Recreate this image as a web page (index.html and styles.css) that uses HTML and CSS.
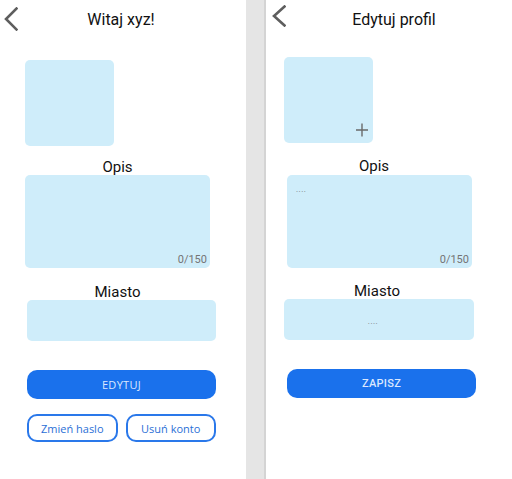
FILE: index.html
```html
<!DOCTYPE html>
<html lang="pl">
<head>
<meta charset="utf-8">
<title>Profil</title>
<link rel="stylesheet" href="styles.css">
</head>
<body>
<div class="screen">
  <section class="panel panel-left">
    <header class="header header-left">
      <svg class="back back-left" width="14" height="24" viewBox="0 0 14 24"><path d="M12.5 1.5 L2 12 L12.5 22.5" fill="none" stroke="#5e5e5e" stroke-width="2.6" stroke-linecap="square"/></svg>
      <h1 class="title">Witaj xyz!</h1>
    </header>
    <div class="content content-left">
      <div class="avatar avatar-left"></div>
      <div class="label label-opis-left">Opis</div>
      <div class="textarea">
        <span class="counter">0/150</span>
      </div>
      <div class="label label-miasto-left">Miasto</div>
      <div class="input input-left"></div>
      <button class="btn-primary btn-edit">EDYTUJ</button>
      <div class="btn-row">
        <button class="btn-outline">Zmień haslo</button>
        <button class="btn-outline">Usuń konto</button>
      </div>
    </div>
  </section>
  <div class="divider"></div>
  <section class="panel panel-right">
    <header class="header header-right">
      <svg class="back back-right" width="14" height="22" viewBox="0 0 14 22"><path d="M12.5 1.5 L2 11 L12.5 20.5" fill="none" stroke="#5e5e5e" stroke-width="2.6" stroke-linecap="square"/></svg>
      <h1 class="title">Edytuj profil</h1>
    </header>
    <div class="content content-right">
      <div class="avatar avatar-right">
        <svg class="plus" width="12" height="14" viewBox="0 0 12 14"><path d="M6 0.5 V13.5 M0 7 H12" stroke="#6a6a6a" stroke-width="1.4" fill="none"/></svg>
      </div>
      <div class="label label-opis-right">Opis</div>
      <div class="textarea textarea-right">
        <span class="placeholder">....</span>
        <span class="counter">0/150</span>
      </div>
      <div class="label label-miasto-right">Miasto</div>
      <div class="input input-right"><span class="placeholder">....</span></div>
      <button class="btn-primary btn-save">ZAPISZ</button>
    </div>
  </section>
</div>
</body>
</html>
```
FILE: styles.css
```css
* { box-sizing: border-box; }
html, body { margin: 0; padding: 0; background: #ffffff; }
body { font-family: Roboto, "Noto Sans", sans-serif; color: #111; }

.screen { display: flex; width: 512px; height: 479px; overflow: hidden; }

.panel { width: 246px; flex: none; display: flex; flex-direction: column; background: #fff; }
.divider { width: 20px; flex: none; background: #e5e5e5; border-right: 2px solid #d4d4d4; }

.header { display: flex; align-items: flex-start; height: 40px; }
.header-left { padding: 0 22px 0 4px; }
.header-right { padding: 0 10px 0 6px; }
.back { flex: none; display: block; }
.back-left { margin-top: 7px; }
.back-right { margin-top: 5px; }
.title { flex: 1; margin: 0; text-align: center; font-size: 16px; font-weight: 400; line-height: 40px; color: #111; }

.content { display: flex; flex-direction: column; align-items: flex-start; }
.content-left { padding-left: 25px; }
.content-right { padding-left: 18px; }

.avatar { width: 89px; height: 86px; background: #cfedfa; border-radius: 5px; display: flex; justify-content: flex-end; align-items: flex-end; padding: 0 5px 6px 0; }
.avatar-left { margin-top: 20px; }
.avatar-right { margin-top: 17px; }
.plus { display: block; }

.label { font-size: 15px; line-height: 16px; text-align: center; color: #111; }
.label-opis-left { width: 185px; margin-top: 13px; }
.label-miasto-left { width: 185px; margin-top: 16px; }
.label-opis-right { width: 180px; margin-top: 15px; }
.label-miasto-right { width: 186px; margin-top: 15px; }

.textarea { width: 185px; height: 93px; background: #cfedfa; border-radius: 5px; display: flex; flex-direction: column; justify-content: space-between; align-items: flex-end; padding: 0 3px 2px 9px; }
.textarea-right { margin-left: 3px; margin-top: 1px; }
.textarea .placeholder { align-self: flex-start; margin-top: 10px; }
.textarea .counter:only-child { margin-top: auto; }
.counter { font-size: 11px; line-height: 12px; color: #747474; }
.placeholder { font-size: 8px; line-height: 10px; color: #777; letter-spacing: 0.5px; }

.input { width: 189px; height: 41px; background: #cfedfa; border-radius: 5px; display: flex; justify-content: center; align-items: flex-end; padding-bottom: 13px; }
.input-left { margin-left: 2px; }
.input-right { width: 190px; padding-right: 12px; }

.btn-primary { width: 189px; height: 29px; border: none; border-radius: 10px; background: #1a71ec; color: #dce8ff; margin-top: 29px; padding: 0; cursor: pointer; }
.btn-edit { margin-left: 2px; font-family: "Open Sans", sans-serif; font-size: 11px; letter-spacing: 0.3px; }
.btn-save { margin-left: 3px; font-family: Roboto, sans-serif; font-weight: 500; font-size: 11px; letter-spacing: 0.3px; }

.btn-row { display: flex; gap: 8px; margin-left: 2px; margin-top: 15px; width: 189px; }
.btn-outline { flex: 1; height: 28px; border: 2px solid #2a78ea; border-radius: 10px; background: #fff; color: #2b6fd6; font-family: "Open Sans", sans-serif; font-size: 11px; padding: 0; cursor: pointer; }
```
